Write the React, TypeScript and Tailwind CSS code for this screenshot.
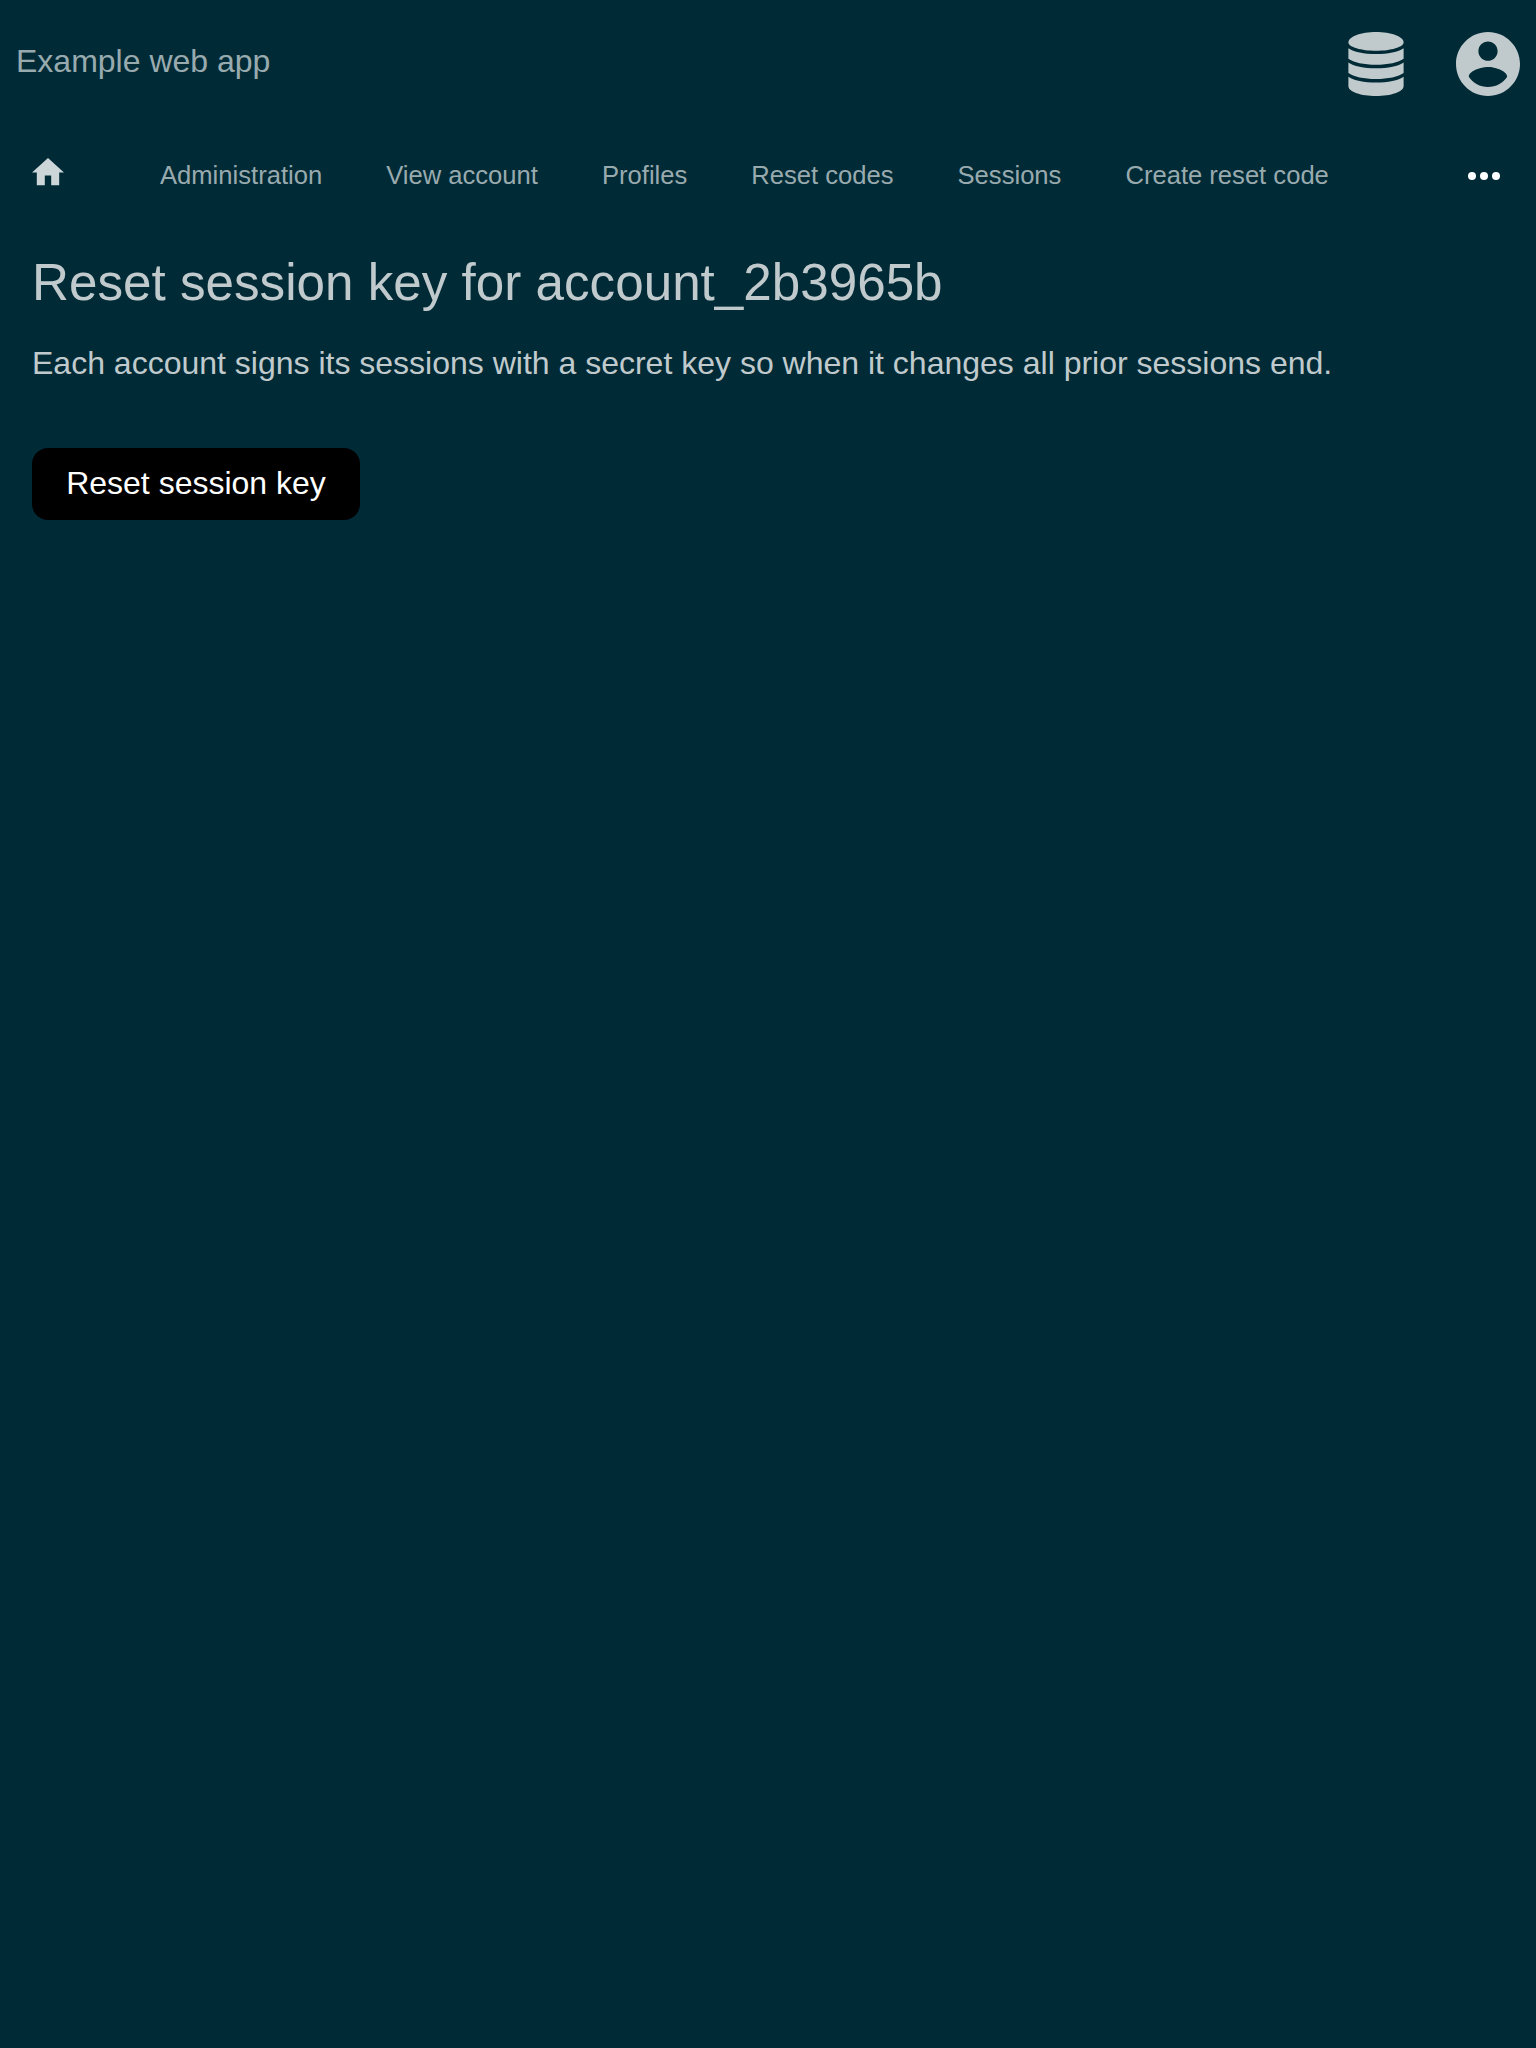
const links = ["Administration", "View account", "Profiles", "Reset codes", "Sessions", "Create reset code"];

function DatabaseIcon() {
  return (
    <svg className="h-16 w-14" viewBox="0 0 56 64" fill="currentColor">
      <g transform="translate(.4 0) scale(.986 1)">
        <path d="M28 0C43 0 56 4.500 56 10.500C56 15 43 18.800 28 18.800S0 15 0 10.500C0 4.500 13 0 28 0z" />
        <path d="M0 16.300c5 3.700 16 5.800 28 5.800s23-2.100 28-5.800v10.500c-5 3.700-16 6-28 6s-23-2.300-28-6z" />
        <path d="M0 30.500c5 3.700 16 5.800 28 5.800s23-2.100 28-5.800v10.500c-5 3.700-16 6-28 6s-23-2.300-28-6z" />
        <path d="M0 44.700c5 3.700 16 5.800 28 5.800s23-2.100 28-5.800v9.300C56 60 43 64 28 64S0 60 0 54z" />
      </g>
    </svg>
  );
}

export default function App() {
  return (
    <div className="min-h-screen bg-[#002b36] font-['Liberation_Sans',Arial,sans-serif] text-[#c0cacd]">
      <header className="flex h-32 items-center justify-between px-4">
        <span className="pb-1.5 text-[32px] leading-9 text-[#99aaaf]">Example web app</span>
        <div className="flex items-center gap-[52px]">
          <DatabaseIcon />
          <svg className="h-16 w-16" viewBox="2 2 20 20" fill="currentColor">
            <path d="M12 2C6.480 2 2 6.480 2 12s4.480 10 10 10 10-4.480 10-10S17.520 2 12 2zm0 3c1.660 0 3 1.340 3 3s-1.340 3-3 3-3-1.340-3-3 1.340-3 3-3zm0 14.200c-2.500 0-4.710-1.280-6-3.220.030-1.990 4-3.080 6-3.080 1.990 0 5.970 1.090 6 3.080-1.290 1.940-3.500 3.220-6 3.220z" />
          </svg>
        </div>
      </header>
      <nav className="flex h-24 items-center pl-8 pr-9">
        <svg className="mb-2 h-[27.2px] w-8 text-[#ccd5d7]" viewBox="2 3 20 17" fill="currentColor">
          <path d="M10 20v-6h4v6h5v-8h3L12 3 2 12h3v8z" />
        </svg>
        <ul className="ml-24 flex gap-16 pb-0.5 text-[25.6px] text-[#99aaaf]">
          {links.map((l) => <li key={l}>{l}</li>)}
        </ul>
        <svg className="ml-auto h-8 w-8 text-white" viewBox="0 0 32 32" fill="currentColor">
          <circle cx="4" cy="16" r="4" /><circle cx="16" cy="16" r="4" /><circle cx="28" cy="16" r="4" />
        </svg>
      </nav>
      <main className="px-8 pt-[29px]">
        <h1 className="text-[51.2px] leading-[60px]">Reset session key for account_2b3965b</h1>
        <p className="mt-8 text-[32px] leading-9">Each account signs its sessions with a secret key so when it changes all prior sessions end.</p>
        <button className="mt-[67px] h-[72px] w-[328px] rounded-2xl bg-black pb-0.5 text-[32px] text-white">Reset session key</button>
      </main>
    </div>
  );
}
